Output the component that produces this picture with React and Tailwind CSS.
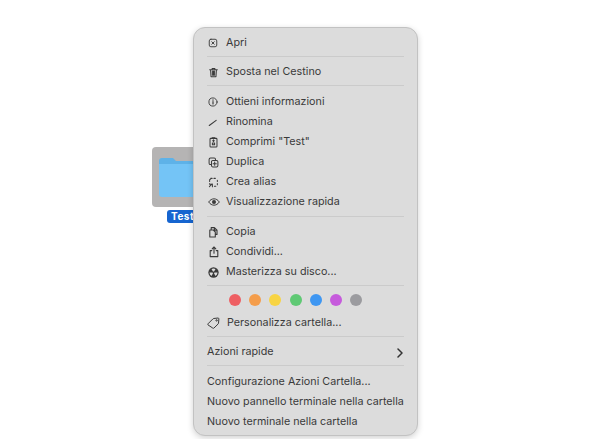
const I = ({ children, s = 10 }) => (
  <svg width={s} height={s} viewBox="0 0 12 12" fill="none" stroke="#3a3a3a" strokeWidth="1.1" strokeLinecap="round" strokeLinejoin="round" className="shrink-0">
    {children}
  </svg>
);

const icons = {
  open: <I><rect x="1.5" y="1.5" width="9" height="9" rx="2" /><path d="M4.5 4.5l3 3M7.5 4.5l-3 3" /></I>,
  trash: <I s={11}><path d="M1.8 3h8.4M4.5 3V1.6h3V3M2.8 3l.5 7.6h5.4L9.2 3M4.8 4.5v4.6M6 4.5v4.6M7.2 4.5v4.6" /></I>,
  info: <I><circle cx="6" cy="6" r="4.9" /><path d="M6 5.4v3M6 3.5v.4" strokeWidth="1.4" /></I>,
  pen: <I><path d="M1.5 10.2 9.8 4" strokeWidth="1.3" /></I>,
  zip: <I s={11}><rect x="2.2" y="1.5" width="7.6" height="9.5" rx="1" /><path d="M4.5 1.5V.8h3v.7M6 3v2M5 4h2M4.8 6.5h2.4v2H4.8z" /></I>,
  dup: <I s={11}><rect x="1.2" y="1.2" width="7" height="7" rx="1.5" /><rect x="3.8" y="3.8" width="7" height="7" rx="1.5" fill="#dcdcdc" /><path d="M7.3 5.5v3.6M5.5 7.3h3.6" /></I>,
  alias: <I s={11}><path d="M3 1.5h1.5M6.5 1.5h1.5M10.2 3.5v1.5M10.2 7v1.5M8.5 10.2H7M3.2 1.8 1.8 3v2M1.8 7v1M1.5 10.5 4.5 7.5M2 7.8h2.8v2.8" /></I>,
  eye: (
    <svg width="12" height="10" viewBox="0 0 14 12" className="shrink-0">
      <path d="M.6 6C2.4 3.4 4.6 2.2 7 2.2s4.6 1.2 6.4 3.8C11.6 8.6 9.4 9.8 7 9.8S2.4 8.6.6 6z" fill="none" stroke="#3a3a3a" strokeWidth="1.2" />
      <circle cx="7" cy="6" r="2.4" fill="#3a3a3a" />
    </svg>
  ),
  copy: <I s={12}><path d="M3.2 3.2V1.6h3.2L9 4.2v4.2H7.8M1.8 4h3.6l1.9 2v5H1.8zM6.4 1.6v2.6H9" /></I>,
  share: <I s={12}><path d="M6 7.2V1.2M4.2 2.8 6 1l1.8 1.8M3.8 4.6H2.2v6h7.6v-6H8.2" /></I>,
  burn: (
    <svg width="11" height="11" viewBox="0 0 12 12" className="shrink-0">
      <circle cx="6" cy="6" r="5.6" fill="#3a3a3a" />
      <path d="M6 6 3.8 2.2a4.4 4.4 0 0 1 4.4 0zM6 6l4.4.1a4.4 4.4 0 0 1-2.2 3.7zM6 6l-4.4.1a4.4 4.4 0 0 0 2.2 3.7z" fill="#dcdcdc" />
      <circle cx="6" cy="6" r="1" fill="#3a3a3a" />
    </svg>
  ),
};

const Sep = ({ m }) => <div className={`h-px bg-[#cbcbcb] mx-[7px] ${m}`} />;

const Row = ({ icon, children }) => (
  <div className="h-[20px] flex items-center text-[#3a3a3a] px-[7px]">
    {icon && <span className="w-[19px] flex items-center justify-start pl-[1px]">{icon}</span>}
    <span className="whitespace-nowrap">{children}</span>
  </div>
);

const dots = ["#ee5f63", "#f49d4b", "#f8d443", "#5fc974", "#3f97f2", "#c65bdc", "#9b9b9f"];

export default function App() {
  return (
    <div className="relative w-[610px] h-[439px] bg-white overflow-hidden pt-[27px] pl-[193px] font-['Inter','Liberation_Sans',sans-serif] text-[10.75px]">
      <div className="absolute left-[152px] top-[147px] w-[50px] h-[60px] rounded-[4px] bg-[#b5b4b4] flex items-center justify-end">
        <svg width="45" height="40" viewBox="0 0 45 40">
          <path d="M2 4a3 3 0 0 1 3-3h11l3 3h26v5H2z" fill="#5eb2e8" />
          <path d="M2 7h43v33H5a3 3 0 0 1-3-3z" fill="#74c4f6" />
        </svg>
      </div>
      <div className="absolute left-[167px] top-[210px] w-[36px] h-[13px] rounded-[3px] bg-[#1665d0] text-white font-bold text-[10px] leading-[13px] pl-[4px] tracking-[0.5px]">
        Test
      </div>

      <div className="relative w-[225px] h-[409px] rounded-[12px] bg-[#dcdcdc] border border-[#c2c2c2] shadow-[0_2px_6px_rgba(0,0,0,0.18)] pt-[5px] px-[6px]">
        <Row icon={icons.open}>Apri</Row>
        <Sep m="mt-[3px] mb-[5.5px]" />
        <Row icon={icons.trash}>Sposta nel Cestino</Row>
        <Sep m="mt-[2.5px] mb-[6px]" />
        <Row icon={icons.info}>Ottieni informazioni</Row>
        <Row icon={icons.pen}>Rinomina</Row>
        <Row icon={icons.zip}>Comprimi "Test"</Row>
        <Row icon={icons.dup}>Duplica</Row>
        <Row icon={icons.alias}>Crea alias</Row>
        <Row icon={icons.eye}>Visualizzazione rapida</Row>
        <Sep m="mt-[3.5px] mb-[5.5px]" />
        <Row icon={icons.copy}>Copia</Row>
        <Row icon={icons.share}>Condividi...</Row>
        <Row icon={icons.burn}>Masterizza su disco...</Row>
        <Sep m="mt-[3px] mb-[5px]" />
        <div className="h-[20px] flex items-center gap-[8.2px] pl-[29px] pb-[2px]">
          {dots.map((c) => (
            <span key={c} className="w-[12px] h-[12px] rounded-full" style={{ backgroundColor: c }} />
          ))}
        </div>
        <div className="h-[20px] mt-[2px] flex items-center text-[#3a3a3a] px-[7px]">
          <span className="w-[20px] flex items-center">
            <svg width="13" height="12" viewBox="0 0 13 12" fill="none" stroke="#3a3a3a" strokeWidth="1">
              <path d="M1 6.8 6 1.8c.2-.2.5-.3.7-.3l4.3-.5c.5 0 .9.3.9.8l-.4 4.4c0 .3-.1.5-.3.7l-4.3 4.2c-.3.3-.8.3-1.1 0L1 7.9c-.3-.3-.3-.8 0-1.1z" />
              <circle cx="9.6" cy="3.4" r=".7" />
            </svg>
          </span>
          <span className="whitespace-nowrap">Personalizza cartella...</span>
        </div>
        <Sep m="mt-[3px] mb-[5.5px]" />
        <div className="h-[20px] flex items-center justify-between text-[#3a3a3a] px-[7px]">
          <span>Azioni rapide</span>
          <svg width="8" height="10" viewBox="0 0 8 10" fill="none" stroke="#333333" strokeWidth="1.5" strokeLinecap="round" strokeLinejoin="round">
            <path d="M2 1l4 4-4 4" />
          </svg>
        </div>
        <Sep m="mt-[2.5px] mb-[6px]" />
        <Row>Configurazione Azioni Cartella...</Row>
        <Row>Nuovo pannello terminale nella cartella</Row>
        <Row>Nuovo terminale nella cartella</Row>
      </div>
    </div>
  );
}
